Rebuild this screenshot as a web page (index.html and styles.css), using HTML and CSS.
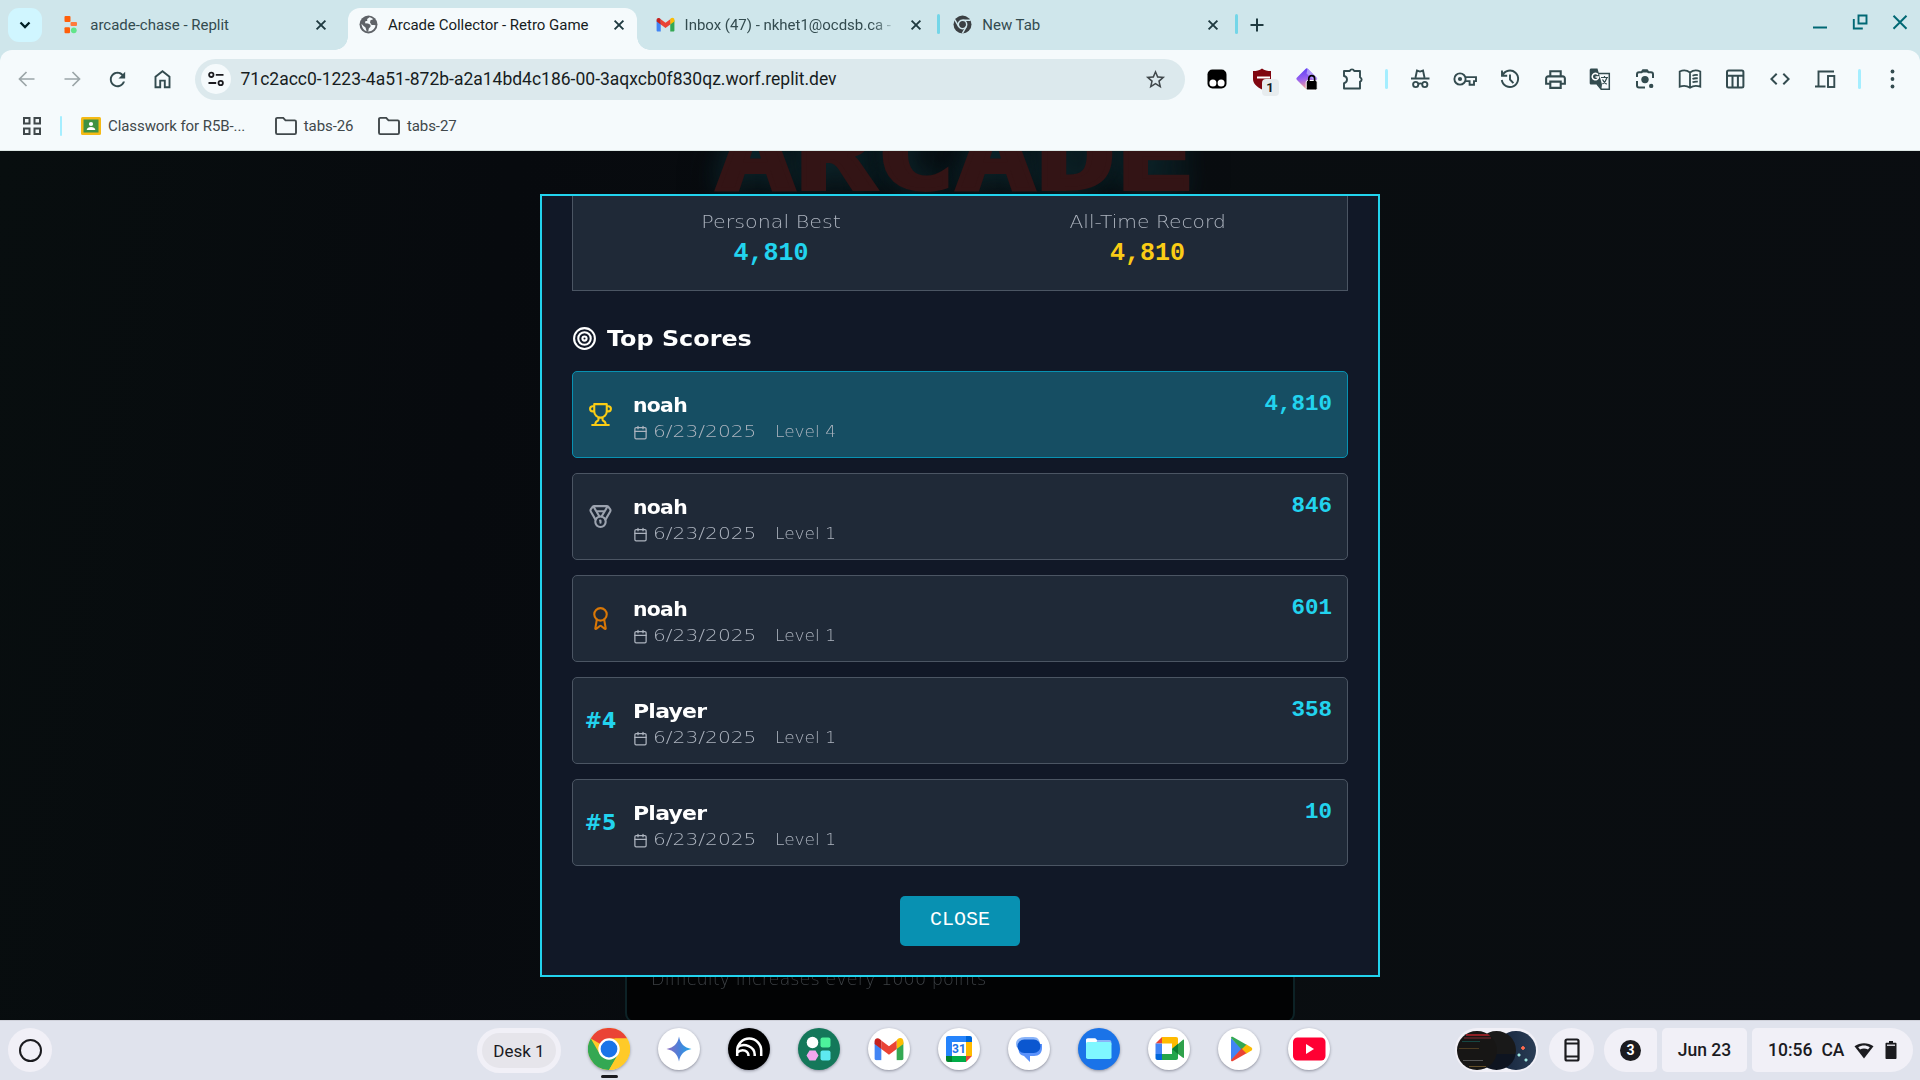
FILE: index.html
```html
<!DOCTYPE html>
<html lang="en">
<head>
<meta charset="utf-8">
<title>Arcade Collector - Retro Game</title>
<link rel="stylesheet" href="styles.css">
</head>
<body>
<svg class="defs" width="0" height="0" aria-hidden="true">
  <symbol id="x" viewBox="0 0 16 16"><path d="M3.6 3.6l8.8 8.8M12.4 3.6l-8.8 8.8" fill="none" stroke="currentColor" stroke-width="1.9"/></symbol>
  <symbol id="folder" viewBox="0 0 24 20"><path d="M2 3.2c0-.8.5-1.3 1.300-1.300h5.900l2.300 2.500h9.200c.8 0 1.300.5 1.300 1.300v11.100c0 .8-.5 1.300-1.300 1.300H3.300c-.8 0-1.300-.5-1.300-1.300z" fill="none" stroke="currentColor" stroke-width="1.9"/></symbol>
  <symbol id="calendar" viewBox="0 0 24 24"><path d="M8 2v4M16 2v4M3 10h18" fill="none" stroke="currentColor" stroke-width="2" stroke-linecap="round"/><rect x="3" y="4" width="18" height="18" rx="2" fill="none" stroke="currentColor" stroke-width="2"/></symbol>
  <symbol id="gmail" viewBox="0 0 32 24"><path d="M1 5v17c0 1 .8 1.800 1.800 1.800H8V9z" fill="#4285f4"/><path d="M31 5v17c0 1-.8 1.800-1.800 1.800H24V9z" fill="#34a853"/><path d="M24 3v9l7-5.200V4c0-3.600-3.600-4.500-6-2.400z" fill="#fbbc04"/><path d="M8 12V3l8 6 8-6v9l-8 6z" fill="#ea4335"/><path d="M1 4v2.800L8 12V3L6.300 1.600C4 0 1 1.200 1 4z" fill="#c5221f"/></symbol>
</svg>

<header class="browser">
  <div class="tabstrip">
    <button class="chooser"><svg width="16" height="16" viewBox="0 0 16 16"><path d="M3.500 5.500L8 10l4.500-4.500" fill="none" stroke="#001f25" stroke-width="2.300"/></svg></button>
    <div class="tabs">
      <div class="tab">
        <svg class="fav" viewBox="0 0 19 19"><rect x="3.500" y="1" width="6" height="6" rx="1" fill="#ff5f0a"/><rect x="9.500" y="7" width="6.500" height="4" rx="1" fill="#ff7a3c"/><rect x="3.500" y="12.300" width="5.500" height="6" rx="1" fill="#ff5f0a"/><circle cx="12.800" cy="15.300" r="2.900" fill="#62e58a"/></svg>
        <span class="tab-title">arcade-chase - Replit</span>
        <svg class="tab-close"><use href="#x"/></svg>
      </div>
      <div class="tab active">
        <svg class="fav" viewBox="0 0 19 19"><circle cx="9.500" cy="9.500" r="9" fill="#5f6368"/><path d="M10.500 2.200L8.200 4v1.900H6.500L6 8.200l3 .2 2.500 1.300v2l-1.700 1.800-.6 3.200-1.500-.3-1.200-3.900-2.200-1.800L2.500 8.700c.3 5 3.700 7.700 7 7.900 3.900-.3 6.700-3 7-6.300l-1.500-.4-2.300.2-1.700-2.600.5-2.200 2.700-1.100c-1-1.100-2.500-1.800-3.700-2z" fill="#f5fafc"/></svg>
        <span class="tab-title">Arcade Collector - Retro Game</span>
        <svg class="tab-close"><use href="#x"/></svg>
      </div>
      <div class="tab ruled">
        <svg class="fav"><use href="#gmail"/></svg>
        <span class="tab-title fade">Inbox (47) - nkhet1@ocdsb.ca -</span>
        <svg class="tab-close"><use href="#x"/></svg>
      </div>
      <div class="tab ruled">
        <svg class="fav" viewBox="0 0 19 19"><circle cx="9.500" cy="9.500" r="9" fill="#3b4043"/><circle cx="9.500" cy="9.500" r="4.200" fill="none" stroke="#cfe6eb" stroke-width="1.500"/><path d="M9.500 5.300h8M5.800 11.600L1.900 4.900M13.200 11.600l-3.900 6.900" stroke="#cfe6eb" stroke-width="1.500"/></svg>
        <span class="tab-title">New Tab</span>
        <svg class="tab-close"><use href="#x"/></svg>
      </div>
    </div>
    <svg class="newtab" viewBox="0 0 16 16"><path d="M8 1.500v13M1.500 8h13" stroke="#1f3a40" stroke-width="2"/></svg>
    <div class="window-controls">
      <svg viewBox="0 0 16 16"><path d="M1 13.500h14" stroke="currentColor" stroke-width="2"/></svg>
      <svg viewBox="0 0 16 16"><path d="M6.500 1.500h8v8h-8zM1.800 5v9.500h9" fill="none" stroke="currentColor" stroke-width="1.900"/></svg>
      <svg viewBox="0 0 16 16"><path d="M1.500 1.800l13 13M14.500 1.800l-13 13" stroke="currentColor" stroke-width="2"/></svg>
    </div>
  </div>

  <div class="toolbar">
    <span class="tool dim"><svg width="24" height="24" viewBox="0 0 24 24"><path d="M19.500 12H5.500M11.500 5l-7 7 7 7" fill="none" stroke="currentColor" stroke-width="1.700"/></svg></span>
    <span class="tool dim"><svg width="24" height="24" viewBox="0 0 24 24"><path d="M4.500 12h14M12.500 5l7 7-7 7" fill="none" stroke="currentColor" stroke-width="1.700"/></svg></span>
    <span class="tool"><svg width="23" height="23" viewBox="0 0 24 24"><path d="M17.650 6.350C16.200 4.900 14.210 4 12 4c-4.420 0-7.990 3.580-7.990 8s3.570 8 7.990 8c3.730 0 6.840-2.550 7.730-6h-2.080c-.82 2.330-3.040 4-5.650 4-3.310 0-6-2.690-6-6s2.690-6 6-6c1.660 0 3.140.69 4.220 1.780L13 11h7V4l-2.350 2.350z" fill="currentColor"/></svg></span>
    <span class="tool"><svg width="24" height="24" viewBox="0 0 24 24"><path d="M5.500 20.200V9.800L12.500 4.200l7 5.600v10.400h-4.700v-6.600h-4.600v6.600z" fill="none" stroke="currentColor" stroke-width="1.900"/></svg></span>
    <div class="omnibox">
      <span class="site-info"><svg width="18" height="18" viewBox="0 0 18 18" fill="none" stroke="#1b1b1f" stroke-width="1.800"><circle cx="4.300" cy="4.800" r="2.200"/><path d="M8.800 4.800h7.700M1.500 13h7.700"/><circle cx="13.700" cy="13" r="2.200"/></svg></span>
      <span class="url">71c2acc0-1223-4a51-872b-a2a14bd4c186-00-3aqxcb0f830qz.worf.replit.dev</span>
      <svg width="23" height="23" viewBox="0 0 24 24"><path d="M22 9.240l-7.190-.62L12 2 9.190 8.630 2 9.240l5.460 4.730L5.820 21 12 17.270 18.180 21l-1.630-7.030L22 9.240zM12 15.400l-3.760 2.270 1-4.280-3.320-2.880 4.380-.38L12 6.100l1.710 4.040 4.380.38-3.320 2.880 1 4.280L12 15.400z" fill="#40484b"/></svg>
    </div>
    <span class="tool ext"><svg width="20" height="20" viewBox="0 0 20 20"><rect x=".5" y=".5" width="19" height="19" rx="5"/><circle cx="5.900" cy="14" r="3.500" fill="#fff"/><circle cx="14.100" cy="14" r="3.500" fill="#fff"/></svg></span>
    <span class="tool"><svg width="20" height="22" viewBox="0 0 20 22"><path d="M10 .5c2.500 2 5.500 2.500 9 2.500v8c0 4.500-4 8-9 10.500C5 19 1 15.500 1 11V3c3.500 0 6.500-.5 9-2.500z" fill="#800610"/><path d="M5 9.500h13" stroke="#fff" stroke-width="2"/></svg><b class="badge">1</b></span>
    <span class="tool ext"><svg width="24" height="24" viewBox="0 0 24 24"><defs><linearGradient id="dia" x1="0.300" y1="0" x2="0.500" y2="1"><stop offset="0" stop-color="#5b3df5"/><stop offset=".5" stop-color="#9a63f0"/><stop offset="1" stop-color="#ffa58a"/></linearGradient></defs><path d="M10.500 2c.9-.9 1.600-.9 2.500 0l8.500 8.500c.9.9.9 1.600 0 2.500L13 21.500c-.9.9-1.600.9-2.500 0L2 13c-.9-.9-.9-1.600 0-2.500z" fill="url(#dia)"/><path d="M12.500 1.500l9 9c1 1 1 1.500 0 2.500l-1.500 1.500-8.500-8z" fill="#b6a2fb" opacity=".85"/><rect x="11.200" y="13.500" width="11" height="9.500" rx="1.500" fill="#000" stroke="#fff" stroke-width="1"/><path d="M13.800 14V11.500a2.900 2.900 0 0 1 5.800 0V14" fill="none" stroke="#000" stroke-width="1.700"/></svg></span>
    <span class="tool"><svg width="24" height="24" viewBox="0 0 24 24"><path d="M4 4h5.800a2.300 2.300 0 0 1 4.400 0H20v6.300a2.300 2.300 0 0 1 0 4.400V21.500H4v-5.300c4-.7 4-6.500 0-7.200z" fill="none" stroke="currentColor" stroke-width="1.900" stroke-linejoin="round"/></svg></span>
    <i class="rule"></i>
    <span class="tool"><svg width="24" height="24" viewBox="0 0 24 24" fill="none" stroke="currentColor" stroke-width="1.900"><path d="M7.500 10.500L9 3.600 12 4.600l3-1 1.500 6.900M3 11.500h18.500"/><circle cx="7.700" cy="17.500" r="2.600"/><circle cx="16.800" cy="17.500" r="2.600"/><path d="M10.500 17c1-.7 2.500-.7 3.500 0"/></svg></span>
    <span class="tool"><svg width="24" height="24" viewBox="0 0 24 24"><circle cx="7" cy="12" r="5.600" fill="none" stroke="currentColor" stroke-width="1.900"/><circle cx="7" cy="12" r="2.100" fill="currentColor"/><path d="M12 10.100h11v4h-2v3.700h-4.400v-3.700H12" fill="none" stroke="currentColor" stroke-width="1.900"/></svg></span>
    <span class="tool"><svg width="24" height="24" viewBox="0 0 24 24" fill="none" stroke="currentColor" stroke-width="1.900"><path d="M4 3.500v5.200h5.200M4.400 8.500A8.200 8.200 0 1 1 3.800 13M12 7.500v5l3.400 3.600"/></svg></span>
    <span class="tool"><svg width="25" height="25" viewBox="0 0 24 24"><path d="M19 8h-1V3H6v5H5c-1.660 0-3 1.340-3 3v6h4v4h12v-4h4v-6c0-1.660-1.340-3-3-3zM8 5h8v3H8V5zm8 12v2H8v-4h8v2zm2-2v-2H6v2H4v-4c0-.55.45-1 1-1h14c.55 0 1 .45 1 1v4h-2z" fill="currentColor"/></svg></span>
    <span class="tool"><svg width="24" height="24" viewBox="0 0 24 24"><path d="M9 6.500h12.300v15.800H13.200L9 17" fill="none" stroke="currentColor" stroke-width="1.500"/><path d="M3.300 1.500h6.200l4.500 16H3.300c-.9 0-1.600-.7-1.600-1.600V3.100c0-.9.7-1.600 1.600-1.600zM14 17.500h-4l3.300 5z" fill="currentColor"/><path d="M10 7.700A3.200 3.200 0 1 0 10.600 10H7.500" fill="none" stroke="#fff" stroke-width="1.600"/><path d="M13 10.500h7M16.500 9v1.500M18.800 11c-.6 2.300-2.200 4.500-4.300 6M14.500 12.500c1 2 2.500 3.700 4.200 4.800" fill="none" stroke="currentColor" stroke-width="1.200"/></svg></span>
    <span class="tool"><svg width="24" height="24" viewBox="0 0 24 24"><path d="M4 10V7.300c0-1.200.8-2 2-2h2.500l1.500-2h4l1.500 2H18c1.200 0 2 .8 2 2V11M4 14v4.500c0 1.200.8 2 2 2h6" fill="none" stroke="currentColor" stroke-width="2"/><circle cx="12" cy="12.600" r="3.700" fill="currentColor"/><circle cx="18.200" cy="18.900" r="2.200" fill="currentColor"/><path d="M9.500 3h5l1 2.500h-7z" fill="currentColor"/></svg></span>
    <span class="tool"><svg width="24" height="24" viewBox="0 0 24 24" fill="none" stroke="currentColor" stroke-width="1.800"><path d="M12 5.500C9 3.200 5 3 1.700 4.500v15.200c3.300-1.300 7.300-1.100 10.300 1 3-2.100 7-2.300 10.300-1V4.500C19 3 15 3.200 12 5.500zM12 5.500v15"/><path d="M14.500 8.700c1.600-.7 3.500-.9 5.300-.6M14.500 12c1.600-.7 3.500-.9 5.300-.6M14.500 15.300c1.600-.7 3.500-.9 5.300-.6"/></svg></span>
    <span class="tool"><svg width="24" height="24" viewBox="0 0 24 24" fill="none" stroke="currentColor" stroke-width="2"><rect x="4" y="3.500" width="16.400" height="17" rx="1.500"/><path d="M4 8.800h16M9.500 9v11M14.900 9v11"/></svg></span>
    <span class="tool"><svg width="24" height="24" viewBox="0 0 24 24"><path d="M9.400 16.600L4.800 12l4.600-4.600L8 6l-6 6 6 6 1.400-1.400zm5.200 0l4.600-4.600-4.600-4.600L16 6l6 6-6 6-1.400-1.400z" fill="currentColor"/></svg></span>
    <span class="tool"><svg width="24" height="24" viewBox="0 0 24 24" fill="none" stroke="currentColor" stroke-width="1.900"><path d="M21 4.500H5.500v14M2 19.500h10.500"/><rect x="15" y="9" width="6.300" height="11"/></svg></span>
    <i class="rule"></i>
    <span class="tool"><svg width="24" height="24" viewBox="0 0 24 24" fill="currentColor"><circle cx="11.500" cy="4.500" r="1.900"/><circle cx="11.500" cy="12" r="1.900"/><circle cx="11.500" cy="19.500" r="1.900"/></svg></span>
  </div>

  <div class="bookmarks">
    <svg width="20" height="20" viewBox="0 0 20 20" fill="none" stroke="#40484b" stroke-width="2"><rect x="2" y="2" width="5.500" height="5.500"/><rect x="12.500" y="2" width="5.500" height="5.500"/><rect x="2" y="12.500" width="5.500" height="5.500"/><rect x="12.500" y="12.500" width="5.500" height="5.500"/></svg>
    <i class="rule"></i>
    <span class="bookmark classwork"><svg width="20" height="18" viewBox="0 0 20 18"><rect width="20" height="18" rx="1.500" fill="#f5ba15"/><rect x="2.500" y="2.500" width="15" height="13" fill="#3f9142"/><circle cx="10" cy="7" r="2.100" fill="#fff"/><path d="M5.700 13c0-4 8.600-4 8.600 0z" fill="#fff"/></svg>Classwork for R5B-...</span>
    <span class="bookmark"><svg width="24" height="20"><use href="#folder"/></svg>tabs-26</span>
    <span class="bookmark"><svg width="24" height="20"><use href="#folder"/></svg>tabs-27</span>
  </div>
</header>

<main class="page">
  <h1 class="logo">ARCADE</h1>
  <section class="instructions"><span>Difficulty increases every 1000 points</span></section>

  <div class="overlay">
    <section class="modal">
      <div class="stats">
        <div class="stat"><span>Personal Best</span><strong>4,810</strong></div>
        <div class="stat gold"><span>All-Time Record</span><strong>4,810</strong></div>
      </div>
      <h2 class="heading"><svg width="25" height="25" viewBox="0 0 24 24" fill="none" stroke="currentColor" stroke-width="2"><circle cx="12" cy="12" r="10"/><circle cx="12" cy="12" r="6"/><circle cx="12" cy="12" r="2"/></svg><span>Top Scores</span></h2>
      <ol class="scores">
        <li class="score current">
          <span class="rank trophy"><svg viewBox="0 0 24 24"><path d="M6 9H4.500a2.500 2.500 0 0 1 0-5H6M18 9h1.500a2.500 2.500 0 0 0 0-5H18M4 22h16M10 14.660V17c0 .55-.47.98-.97 1.210C7.850 18.750 7 20.240 7 22M14 14.660V17c0 .55.47.98.97 1.210C16.150 18.750 17 20.240 17 22M18 2H6v7a6 6 0 0 0 12 0V2Z"/></svg></span>
          <div class="who"><b class="short">noah</b><p><svg width="15" height="15"><use href="#calendar"/></svg><time>6/23/2025</time><span>Level 4</span></p></div>
          <strong>4,810</strong>
        </li>
        <li class="score">
          <span class="rank medal"><svg viewBox="0 0 24 24"><path d="M7.210 15 2.660 7.140a2 2 0 0 1 .13-2.200L4.400 2.800A2 2 0 0 1 6 2h12a2 2 0 0 1 1.600.8l1.600 2.140a2 2 0 0 1 .14 2.200L16.790 15M11 12 5.120 2.200M13 12l5.880-9.800M8 7h8M12 18v-2h-.5"/><circle cx="12" cy="17" r="5"/></svg></span>
          <div class="who"><b class="short">noah</b><p><svg width="15" height="15"><use href="#calendar"/></svg><time>6/23/2025</time><span>Level 1</span></p></div>
          <strong>846</strong>
        </li>
        <li class="score">
          <span class="rank award"><svg viewBox="0 0 24 24"><path d="m15.477 12.890 1.515 8.526a.5.5 0 0 1-.81.47l-3.580-2.687a1 1 0 0 0-1.197 0l-3.586 2.686a.5.5 0 0 1-.81-.469l1.514-8.526"/><circle cx="12" cy="8" r="6"/></svg></span>
          <div class="who"><b class="short">noah</b><p><svg width="15" height="15"><use href="#calendar"/></svg><time>6/23/2025</time><span>Level 1</span></p></div>
          <strong>601</strong>
        </li>
        <li class="score">
          <span class="rank">#4</span>
          <div class="who"><b>Player</b><p><svg width="15" height="15"><use href="#calendar"/></svg><time>6/23/2025</time><span>Level 1</span></p></div>
          <strong>358</strong>
        </li>
        <li class="score">
          <span class="rank">#5</span>
          <div class="who"><b>Player</b><p><svg width="15" height="15"><use href="#calendar"/></svg><time>6/23/2025</time><span>Level 1</span></p></div>
          <strong>10</strong>
        </li>
      </ol>
      <button class="close">CLOSE</button>
    </section>
  </div>
</main>

<footer class="shelf">
  <span class="launcher"></span>
  <span class="desk">Desk 1</span>
  <nav class="apps">
    <span class="app running"><svg viewBox="0 0 42 42"><circle cx="21" cy="21" r="21" fill="#ffca28"/><path d="M21 21L2.800 10.500A21 21 0 0 1 39.200 10.500H21z" fill="#ea4335"/><path d="M2.800 10.500A21 21 0 0 0 21 42l9.100-15.800L11.900 26.200z" fill="#34a853"/><path d="M39.200 10.500A21 21 0 0 1 21 42l9.500-16L27 10.500z" fill="#ffca28"/><circle cx="21" cy="21" r="10.700" fill="#fff"/><circle cx="21" cy="21" r="8.400" fill="#1a73e8"/></svg></span>
    <span class="app"><svg viewBox="0 0 42 42"><defs><linearGradient id="gem" x1="0" x2="1"><stop offset="0" stop-color="#8e6fc0"/><stop offset=".5" stop-color="#4c7fd9"/><stop offset="1" stop-color="#20a8e8"/></linearGradient></defs><path d="M21 8.500C22.500 16 26 19.500 33.500 21 26 22.500 22.500 26 21 33.500 19.500 26 16 22.500 8.500 21 16 19.500 19.500 16 21 8.500z" fill="url(#gem)"/></svg></span>
    <span class="app black"><svg viewBox="0 0 42 42" fill="none" stroke="#fff" stroke-width="2.500"><path d="M9.200 28v-5.500a12 12 0 0 1 24 0V28M9.200 19.500c7-5.500 17.500-.5 17.500 7V28M9.200 24.500c5.500-4.500 11.300-1.500 11.300 3.500"/></svg></span>
    <span class="app green"><svg viewBox="0 0 42 42"><circle cx="14.500" cy="14.500" r="5.800" fill="#fff"/><rect x="22.500" y="9.500" width="10" height="10" rx="2" fill="#4df29b"/><path d="M11.500 22.500h6l3 5-3 5h-6l-3-5z" fill="#f1a7ee"/><rect x="22.500" y="22.500" width="10" height="10" rx="2" fill="#5eeaf0"/></svg></span>
    <span class="app"><svg viewBox="0 0 42 42"><use href="#gmail" x="5.500" y="9.500" width="31" height="23"/></svg></span>
    <span class="app calendar"><svg viewBox="0 0 42 42"><path d="M10 8h18v6H14v14H8V10c0-1.100.9-2 2-2z" fill="#2684fc"/><path d="M28 8h4c1.100 0 2 .9 2 2v4h-6z" fill="#0066da"/><path d="M28 14h6v14h-6z" fill="#ffba00"/><path d="M14 28h14v6H14z" fill="#00ac47"/><path d="M8 28h6v6h-4a2 2 0 0 1-2-2z" fill="#00832d"/><path d="M28 28h6l-6 6z" fill="#ea4335"/></svg><b>31</b></span>
    <span class="app"><svg viewBox="0 0 42 42"><path d="M17 9h8c5 0 6 3 7 6l-17 7C10 22 8 19 8 15.500S11 9 17 9z" fill="#8ab4f8"/><path d="M17 16h17v4c0 5-3 8-8 8h-4v6l-6-6c-4-1-6-4-5-7z" fill="#5b92fb"/><rect x="9.500" y="11.500" width="23" height="13.500" rx="6.700" fill="#0b57d0"/></svg></span>
    <span class="app blue"><svg viewBox="0 0 42 42"><path d="M8 12c0-1 .7-1.800 1.800-1.800h7.500l3 3h11c1 0 1.700.8 1.700 1.800v4H8z" fill="#fff"/><path d="M20 12h11.500c1 0 1.800.8 1.800 1.800V17H16z" fill="#8ab4f8"/><rect x="8" y="14" width="25.500" height="17" rx="1.800" fill="#7ff7ff"/></svg></span>
    <span class="app"><svg viewBox="0 0 42 42"><path d="M7.500 15.500l6.500-6.500v6.500z" fill="#ea4335"/><path d="M14 9h14c1.500 0 2 .8 2 2v10l-6-1v-4.500H14z" fill="#ffba00"/><path d="M7.500 15.500H14V26H7.500z" fill="#4285f4"/><path d="M7.500 26H14v6H9.500c-1.200 0-2-.8-2-2z" fill="#0066da"/><path d="M14 26h10v-5l6-5v14c0 1.200-.7 2-2 2H14z" fill="#22a64b"/><path d="M30 16l5-4.200c.5-.4 1-.2 1 .5v17c0 .7-.5.9-1 .5L30 26l-6-5z" fill="#2ea14b"/><path d="M24 21l6-5v10z" fill="#0b7d32"/></svg></span>
    <span class="app"><svg viewBox="0 0 42 42"><path d="M13 10v22.500L24 21z" fill="#4285f4"/><path d="M13 10c0-1.200 1-1.500 2-1l14 8-5 5z" fill="#34a853"/><path d="M13 32c0 1.200 1 1.500 2 1l14-8-5-5z" fill="#ea4335"/><path d="M28.500 16.500l5 3c1 .7 1 2.300 0 3l-5 3L24 21z" fill="#fbbc04"/></svg></span>
    <span class="app"><svg viewBox="0 0 42 42"><rect x="5" y="9.500" width="32.500" height="23" rx="4.500" fill="#ff0033"/><path d="M18 16v10l8-5z" fill="#fff"/></svg></span>
  </nav>
  <div class="status">
    <span class="holding"><i class="shot night"></i><i class="shot dusk"></i><i class="shot code"></i></span>
    <span class="phone"><svg width="16" height="24" viewBox="0 0 16 24" fill="none" stroke="#1b1b1f" stroke-width="2.200"><rect x="1.500" y="1.500" width="13" height="21" rx="1.500"/><path d="M1.500 5.500h13M1.500 18.500h13"/></svg></span>
    <span class="pill count"><b>3</b></span>
    <span class="pill date">Jun 23</span>
    <span class="pill tray"><span>10:56</span><span>CA</span>
      <svg class="wifi" width="20" height="17" viewBox="0 0 20 17"><path d="M10 16.500L.5 4.200C6 .1 14 .1 19.500 4.200z" fill="#1b1b1f"/><path d="M4.200 5.200c3.500-2.200 8.100-2.200 11.600 0l-1.800 2.400c-2.500-1.500-5.500-1.500-8 0z" fill="#f1f0f7"/></svg>
      <svg width="12" height="18" viewBox="0 0 12 18"><path d="M4 0h4v1.800h2.500c.6 0 1 .4 1 1V17c0 .6-.4 1-1 1h-9c-.6 0-1-.4-1-1V2.800c0-.6.4-1 1-1H4z" fill="#1b1b1f"/><path d="M2 4.200h8" stroke="#f1f0f7" stroke-width="1.300"/></svg>
    </span>
  </div>
</footer>
</body>
</html>
```
FILE: styles.css
```css
* { box-sizing: border-box; }
body {
  margin: 0;
  width: 1920px;
  height: 1080px;
  overflow: hidden;
  display: flex;
  flex-direction: column;
  font-family: Roboto, sans-serif;
}
svg { flex: none; display: block; }
button { border: 0; padding: 0; }
.defs { position: absolute; }

/* Browser frame */
.browser { height: 151px; flex: none; background: #cfe6eb; }
.tabstrip { display: flex; height: 50px; }
.chooser {
  width: 34px; height: 34px; margin: 8px 8.300px 0 8px;
  border-radius: 11px; background: #d0f6ff;
  display: flex; align-items: center; justify-content: center;
}
.tabs { display: flex; padding-top: 8px; }
.tab {
  position: relative;
  width: 297.670px; height: 42px;
  padding: 0 18.600px 9px 11px;
  display: flex; align-items: center;
  color: #334b4f; font-size: 15px;
}
.fav { width: 19px; height: 19px; margin-right: 10px; }
.tab-title { flex: 1; white-space: nowrap; margin-right: 10px; line-height: 20px; letter-spacing: -.02px; }
.tab-title.fade { -webkit-mask-image: linear-gradient(90deg, #000 88%, transparent); mask-image: linear-gradient(90deg, #000 88%, transparent); }
.tab-close { width: 16px; height: 16px; color: #1f3a40; }
.active { width: 289px; margin-right: 7.670px; padding-right: 10px; background: #f5fafc; border-radius: 12px 12px 0 0; color: #171d1e; }
.active::before, .active::after {
  content: ""; position: absolute; bottom: 0; width: 13px; height: 13px;
}
.active::before { left: -13px; background: radial-gradient(circle at 0 0, transparent 12.500px, #f5fafc 13px); }
.active::after { right: -13px; background: radial-gradient(circle at 100% 0, transparent 12.500px, #f5fafc 13px); }
.ruled::after {
  content: ""; position: absolute; right: 2px; top: 6px;
  width: 3px; height: 20px; border-radius: 2px; background: #74d6e8;
}
.newtab { width: 16px; height: 16px; margin: 17px 0 0 9.500px; }
.window-controls { margin: 14px 12px 0 auto; display: flex; gap: 24px; color: #006874; }
.window-controls svg { width: 16px; height: 16px; }

.toolbar {
  height: 58px; padding-left: 4.500px;
  display: flex; align-items: center;
  background: #f5fafc; border-radius: 12px 12px 0 0;
  color: #334b4f;
}
.tool { position: relative; width: 45px; flex: none; display: flex; justify-content: center; }
.dim { color: #9ba5a8; }
.badge {
  position: absolute; left: 22px; top: 11px;
  width: 17px; height: 17px; border-radius: 4px; background: #e7ecee;
  font-size: 13px; line-height: 17px; text-align: center; color: #171d1e;
}
.omnibox {
  width: 990px; height: 41px; margin: 0 10px; padding: 0 18px 0 6px;
  display: flex; align-items: center;
  border-radius: 21px; background: #dce9ed;
}
.site-info { width: 30px; height: 30px; border-radius: 50%; background: #f5fafc; display: grid; place-items: center; }
.url { flex: 1; margin-left: 10px; font-size: 17.500px; line-height: 24px; color: #171d1e; }
.rule { width: 3px; height: 20px; margin: 0 10px; border-radius: 2px; background: #a5eeff; }

.bookmarks {
  height: 43px; padding: 0 0 7px 22px;
  display: flex; align-items: center;
  background: #f5fafc; border-bottom: 1px solid #dce6e4;
  font-size: 15px; letter-spacing: -.08px; color: #40484b;
}
.bookmarks .rule { width: 2px; margin: 0 19px 0 18px; }
.bookmark { display: flex; align-items: center; gap: 7px; margin-right: 23.500px; }
.classwork { margin-right: 28.500px; }
.bookmark + .bookmark { gap: 6px; }

/* Game page, dimmed behind the dialog */
.page {
  position: relative; height: 869px; flex: none; overflow: hidden;
  display: flex; flex-direction: column; align-items: center; justify-content: space-between;
  background: linear-gradient(100deg, #080e0f 0, #070a0e 25%, #090d10 55%, #0a0d11 100%);
}
.logo {
  height: 50px; margin: 0 10px 0 0;
  font: bold 96px/10px "DejaVu Sans Mono", monospace;
  color: #331415; -webkit-text-stroke: 4px #331415; transform: scaleX(1.384);
  text-shadow: 0 0 22px #0d2a30, 0 0 34px #0b1d22;
}
.instructions {
  width: 670px; height: 66px; margin-bottom: -3px; padding: 11px 24px 0;
  border: 2px solid #0d2226; border-top: 0; border-radius: 0 0 10px 10px; background: #020304;
  font: 200 17px/22px "DejaVu Sans Light", "DejaVu Sans", sans-serif; color: #3d4145;
}
.instructions span { display: inline-block; transform: scaleX(1.043); transform-origin: left; }
.overlay { position: absolute; inset: 43px 0 0; display: flex; justify-content: center; align-items: flex-start; }
.modal {
  width: 840px; height: 783px; padding: 0 30px; overflow: hidden;
  border: 2px solid #22d3ee; background: #111827;
  display: flex; flex-direction: column;
}
.stats {
  height: 95px; flex: none; padding: 15px 12px 0 10px;
  display: grid; grid-template-columns: 1fr 1fr;
  border: 1px solid #4b5563; border-top: 0; background: #1f2937;
}
.stat { display: flex; flex-direction: column; align-items: center; color: #22d3ee; }
.stat span { font: 200 17.500px/22px "DejaVu Sans Light", "DejaVu Sans", sans-serif; color: #adb4bf; transform: scaleX(1.18); }
.stat strong { font: bold 25px/36px "Liberation Mono", monospace; margin-top: 3px; }
.gold { color: #facc15; padding-left: 1px; }
.gold span { transform: scaleX(1.155); }
.heading {
  height: 35px; margin: 30px 0 15px; display: flex; align-items: center; gap: 10px;
  font: bold 22px/28px "DejaVu Sans", sans-serif; color: #fff;
}
.heading span { transform: scaleX(1.085); transform-origin: left; }
.scores { list-style: none; margin: 0 0 30px; padding: 0; display: flex; flex-direction: column; gap: 15px; }
.score {
  height: 87px; padding-right: 15px; display: flex;
  border: 1px solid #4b5563; border-radius: 5px; background: #1f2937;
}
.current { background: #164e63; border-color: #0891b2; }
.rank {
  width: 55px; margin-right: 5px; display: flex; align-items: center; justify-content: center;
  font: bold 20.500px "DejaVu Sans", sans-serif; color: #22d3ee;
}
.rank svg { width: 25px; height: 25px; fill: none; stroke: currentColor; stroke-width: 2; stroke-linecap: round; stroke-linejoin: round; }
.trophy { color: #facc15; }
.medal { color: #9ca3af; }
.award { color: #d97706; }
.who { flex: 1; padding-top: 19px; }
.who b { display: block; font: bold 20px/28px "DejaVu Sans", sans-serif; letter-spacing: -.7px; color: #fff; transform: scaleX(1.1); transform-origin: left; }
.who .short { transform: scaleX(1.02); }
.who p { margin: 0; height: 26px; display: flex; align-items: center; font: 200 16px/22px "DejaVu Sans Light", "DejaVu Sans", sans-serif; color: #adb4bf; }
.who time { width: 102px; margin: 0 20px 0 5px; transform: scaleX(1.26); transform-origin: left; }
.who time { width: 81px; margin-right: 41px; }
.who p span { transform: scaleX(1.06); transform-origin: left; }
.score strong { margin-top: 18px; font: bold 22.500px/28px "Liberation Mono", monospace; color: #22d3ee; }
.close {
  width: 120px; height: 50px; align-self: center; padding-bottom: 3px;
  border-radius: 5px; background: #0891b2; color: #fff;
  font: 20px/24px "Liberation Mono", monospace;
}

/* ChromeOS shelf */
.shelf {
  height: 60px; flex: none; padding: 7px 7px 0 8px; display: flex;
  background: #e0e3ed; border-top: 1px solid #cfd1da; color: #1b1b1f;
}
.launcher { width: 44px; height: 44px; border-radius: 50%; background: #f1f0f7; display: grid; place-items: center; }
.launcher::before { content: ""; width: 19px; height: 19px; border: 2.500px solid #1b1b1f; border-radius: 50%; }
.desk {
  width: 84px; height: 45px; margin-left: 425px;
  border: 5px solid #f1f0f7; border-radius: 23px; background: #e6e5eb;
  font-size: 17px; font-weight: 450; line-height: 36px; text-align: center;
}
.apps { display: flex; gap: 28px; margin-left: 27px; }
.app { position: relative; width: 42px; height: 42px; border-radius: 50%; background: #fff; box-shadow: 0 1px 3px rgba(40, 42, 60, .45); }
.app svg { width: 42px; height: 42px; }
.black { background: #000; }
.green { background: #14785a; }
.blue { background: #1a73e8; }
.calendar b { position: absolute; inset: 0; text-align: center; font-size: 12px; line-height: 43px; color: #1a73e8; }
.running::after { content: ""; position: absolute; left: 13px; top: 47px; width: 17px; height: 3px; border-radius: 2px; background: #1b1b1f; }
.status { display: flex; margin-left: auto; height: 44px; }
.holding { width: 83px; margin-right: 11px; padding: 3px 2px; border-radius: 22px; background: #f1f0f7; display: flex; flex-direction: row-reverse; justify-content: flex-end; }
.shot { width: 40px; height: 39px; border-radius: 50%; }
.night { margin-left: -20px; background: radial-gradient(circle at 27px 17px, #ff6a4d 1.500px, transparent 2px), radial-gradient(circle at 23px 24px, #9fe8e0 1px, transparent 2px), radial-gradient(circle at 30px 29px, #9fe8e0 1px, transparent 2px), linear-gradient(90deg, #14233b, #2a3d55); }
.dusk { margin-left: -20px; background: linear-gradient(#191919 60%, #0e1420 60%); z-index: 1; }
.code { z-index: 2; background: linear-gradient(#8f1f24 0 0) 9px 3px / 28px 2px no-repeat, linear-gradient(#4d2023 0 0) 7px 6px / 27px 2px no-repeat, linear-gradient(#164642 0 0) 5px 10px / 18px 1px no-repeat, linear-gradient(#4b3b20 0 0) 2px 17px / 20px 1px no-repeat, linear-gradient(#555 0 0) 6px 29px / 20px 1px no-repeat, linear-gradient(#65502a 0 0) 12px 35px / 17px 1px no-repeat, #171615; }
.phone { width: 45px; border-radius: 50%; background: #f1f0f7; display: grid; place-items: center; margin-right: 10px; }
.pill { background: #f1f0f7; border-radius: 5px; display: flex; align-items: center; font-size: 17.500px; font-weight: 500; }
.count { width: 53px; border-radius: 22px 5px 5px 22px; margin-right: 5px; padding-left: 16px; }
.count b { width: 21px; height: 21px; border-radius: 50%; background: #1b1b1f; color: #fff; font-size: 14px; line-height: 21px; text-align: center; }
.date { width: 85px; margin-right: 5px; justify-content: center; }
.tray { width: 161px; border-radius: 5px 22px 22px 5px; padding-left: 16px; }
.tray span { margin-right: 9px; }
.wifi { margin-right: 11px; margin-left: 1px; }
```
